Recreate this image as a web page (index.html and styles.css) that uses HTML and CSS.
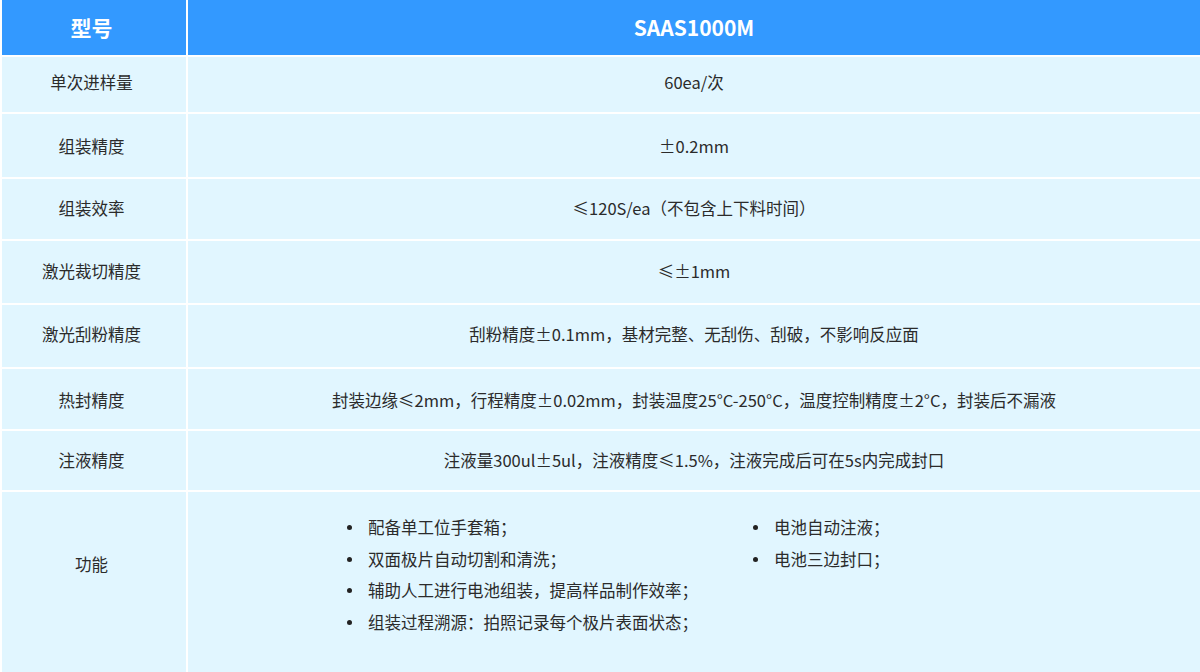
FILE: index.html
```html
<!DOCTYPE html>
<html lang="zh-CN">
<head>
<meta charset="utf-8">
<title>SAAS1000M</title>
<link rel="stylesheet" href="styles.css">
</head>
<body>
<div class="spec">
  <div class="cell head label">型号</div>
  <div class="cell head">SAAS1000M</div>

  <div class="cell label r1">单次进样量</div>
  <div class="cell r1">60ea/次</div>

  <div class="cell label r2">组装精度</div>
  <div class="cell r2">±0.2mm</div>

  <div class="cell label r3">组装效率</div>
  <div class="cell r3">≤120S/ea（不包含上下料时间）</div>

  <div class="cell label r4">激光裁切精度</div>
  <div class="cell r4">≤±1mm</div>

  <div class="cell label r5">激光刮粉精度</div>
  <div class="cell r5">刮粉精度±0.1mm，基材完整、无刮伤、刮破，不影响反应面</div>

  <div class="cell label r6">热封精度</div>
  <div class="cell r6">封装边缘≤2mm，行程精度±0.02mm，封装温度25°C-250°C，温度控制精度±2°C，封装后不漏液</div>

  <div class="cell label r7">注液精度</div>
  <div class="cell r7">注液量300ul±5ul，注液精度≤1.5%，注液完成后可在5s内完成封口</div>

  <div class="cell label r8 func-label">功能</div>
  <div class="cell r8 features">
    <ul class="list list-a">
      <li>配备单工位手套箱；</li>
      <li>双面极片自动切割和清洗；</li>
      <li>辅助人工进行电池组装，提高样品制作效率；</li>
      <li>组装过程溯源：拍照记录每个极片表面状态；</li>
    </ul>
    <ul class="list list-b">
      <li>电池自动注液；</li>
      <li>电池三边封口；</li>
    </ul>
  </div>
</div>
</body>
</html>
```

FILE: styles.css
```css
html, body {
  margin: 0;
  padding: 0;
  background: #ffffff;
}

body {
  font-family: "Noto Sans CJK SC", "Noto Sans", sans-serif;
  color: #2b2b2b;
  padding-left: 2px;
}

.spec {
  display: grid;
  grid-template-columns: 184px 1fr;
  grid-template-rows: 55px 55px 63px 60px 62px 62px 60px 59px 180px;
  column-gap: 2px;
  row-gap: 2px;
  background: #ffffff;
  width: 1198px;
  height: 672px;
}

.cell {
  background: #e1f6ff;
  display: flex;
  align-items: center;
  justify-content: center;
  font-size: 16.5px;
  line-height: 1.3;
  text-align: center;
}

.label {
  padding-right: 5px;
}

.head {
  background: #3399ff;
  color: #ffffff;
  font-weight: 700;
  font-size: 21px;
}

.r1 {
  padding-bottom: 3px;
}

.r2 {
  padding-top: 3px;
}

.r5 {
  padding-bottom: 2px;
}

.r6 {
  padding-top: 4px;
}

.func-label {
  padding-bottom: 34px;
}

.features {
  align-items: flex-start;
  justify-content: flex-start;
  padding-top: 20px;
  padding-left: 159px;
  text-align: left;
}

.list {
  list-style: none;
  margin: 0;
  padding: 0;
}

.list li {
  display: flex;
  align-items: center;
  height: 31.5px;
  white-space: nowrap;
}

.list li::before {
  content: "";
  width: 5px;
  height: 5px;
  border-radius: 50%;
  background: #222222;
  margin-right: 16px;
  flex: none;
}

.list-a {
  width: 406px;
}
```
